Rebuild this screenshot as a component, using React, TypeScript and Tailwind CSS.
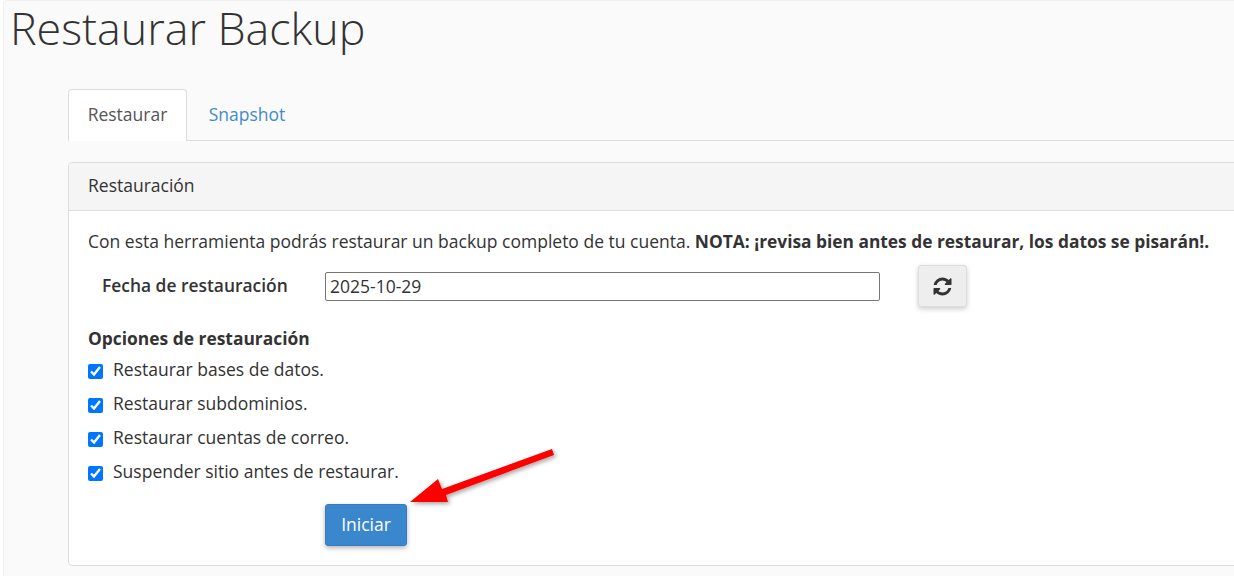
const restoreOptions = [
  "Restaurar bases de datos.",
  "Restaurar subdominios.",
  "Restaurar cuentas de correo.",
  "Suspender sitio antes de restaurar.",
];

function RestoreOption({ label }: { label: string }) {
  return (
    <label className="flex h-[34px] items-center">
      <input type="checkbox" defaultChecked className="m-0 h-[15px] w-[15px] shrink-0 translate-y-[1px] accent-[#0075ff]" />
      <span className="ml-[10px] -translate-y-[1px]">{label}</span>
    </label>
  );
}

function RefreshIcon() {
  return (
    <svg width="21" height="21" viewBox="0 0 1792 1792" fill="currentColor">
      <path d="M1639 1056q0 5-1 7-64 268-268 434.5t-478 166.5q-146 0-282.5-55t-243.5-157l-129 129q-19 19-45 19t-45-19-19-45v-448q0-26 19-45t45-19h448q26 0 45 19t19 45-19 45l-137 137q71 66 161 102t187 36q134 0 250-65t186-179q11-17 53-117 8-23 30-23h192q13 0 22.5 9.5t9.5 22.5zm25-800v448q0 26-19 45t-45 19h-448q-26 0-45-19t-19-45 19-45l138-138q-148-137-349-137-134 0-250 65t-186 179q-11 17-53 117-8 23-30 23h-199q-13 0-22.5-9.5t-9.5-22.5v-7q65-268 270-434.5t480-166.5q146 0 284 55.5t245 156.5l130-129q19-19 45-19t45 19 19 45z" />
    </svg>
  );
}

function RedArrow() {
  return (
    <svg className="absolute left-[405px] top-[444px]" width="155" height="66" viewBox="0 0 155 66">
      <defs>
        <filter id="arrow-shadow" x="-10%" y="-20%" width="125%" height="150%">
          <feDropShadow dx="2" dy="2" stdDeviation="2" floodColor="#000" floodOpacity="0.35" />
        </filter>
      </defs>
      <path
        d="M5 58 L33 35 L37 45 L147 5 L149 11 L41 51 L43 58 Z"
        fill="#ff0000"
        filter="url(#arrow-shadow)"
      />
    </svg>
  );
}

export default function App() {
  return (
    <div className="relative h-[576px] w-[1234px] overflow-hidden bg-white font-['Open_Sans',sans-serif] text-[17.5px] text-[#333]">
      <div className="ml-[3px] h-full w-[1300px] rounded-tl-[4px] border-l border-t border-[#f0f0f0] bg-[#fafafa] pl-[6px]">
        <h1 className="h-[88px] text-[44.8px] leading-[54px] font-light text-[#333]">Restaurar Backup</h1>

        <div className="ml-[58px]">
          <div className="flex h-[52px] border-b border-[#ddd]">
            <div className="flex h-[52px] w-[119px] items-center justify-center rounded-t-[4px] border border-b-0 border-[#ddd] bg-white pb-[2px] text-[#555]">
              Restaurar
            </div>
            <div className="flex w-[120px] items-center justify-center text-[#428bca]">Snapshot</div>
          </div>

          <div className="mt-[21px] h-[404px] rounded-[4px] border border-[#ddd] bg-white">
            <div className="flex h-[48px] items-center rounded-t-[4px] border-b border-[#ddd] bg-[#f5f5f5] pb-[2px] pl-[19px]">
              Restauración
            </div>
            <div className="pt-[18px] pl-[19px]">
              <p className="leading-[24px]">
                Con esta herramienta podrás restaurar un backup completo de tu cuenta.{" "}
                <strong className="text-[17.35px] font-bold">NOTA: ¡revisa bien antes de restaurar, los datos se pisarán!.</strong>
              </p>
              <div className="mt-[9px] flex h-[48px] items-center">
                <span className="ml-[14px] w-[223px] pb-[2px] text-[17.4px] font-semibold">Fecha de restauración</span>
                <input
                  type="text"
                  defaultValue="2025-10-29"
                  className="h-[29px] w-[555px] rounded-[2px] border border-[#767676] bg-white px-[4px] text-[17.5px] text-[#333]"
                />
                <button
                  type="button"
                  className="ml-[38px] flex h-[42px] w-[49px] items-center justify-center rounded-[3px] border border-[#ddd] bg-[#eee] text-[#333] shadow-[0_2px_5px_rgba(0,0,0,0.2)]"
                >
                  <RefreshIcon />
                </button>
              </div>
              <p className="mt-[16px] text-[17.4px] leading-[24px] font-bold">Opciones de restauración</p>
              <div className="mt-[3px]">
                {restoreOptions.map((option) => (
                  <RestoreOption key={option} label={option} />
                ))}
              </div>
              <button
                type="button"
                className="mt-[15px] ml-[237px] h-[42px] w-[82px] rounded-[3px] border border-[#357ebd] bg-[#3a87cd] pb-[1px] text-white shadow-[0_2px_5px_rgba(0,0,0,0.3)]"
              >
                Iniciar
              </button>
            </div>
          </div>
        </div>
      </div>
      <RedArrow />
    </div>
  );
}
